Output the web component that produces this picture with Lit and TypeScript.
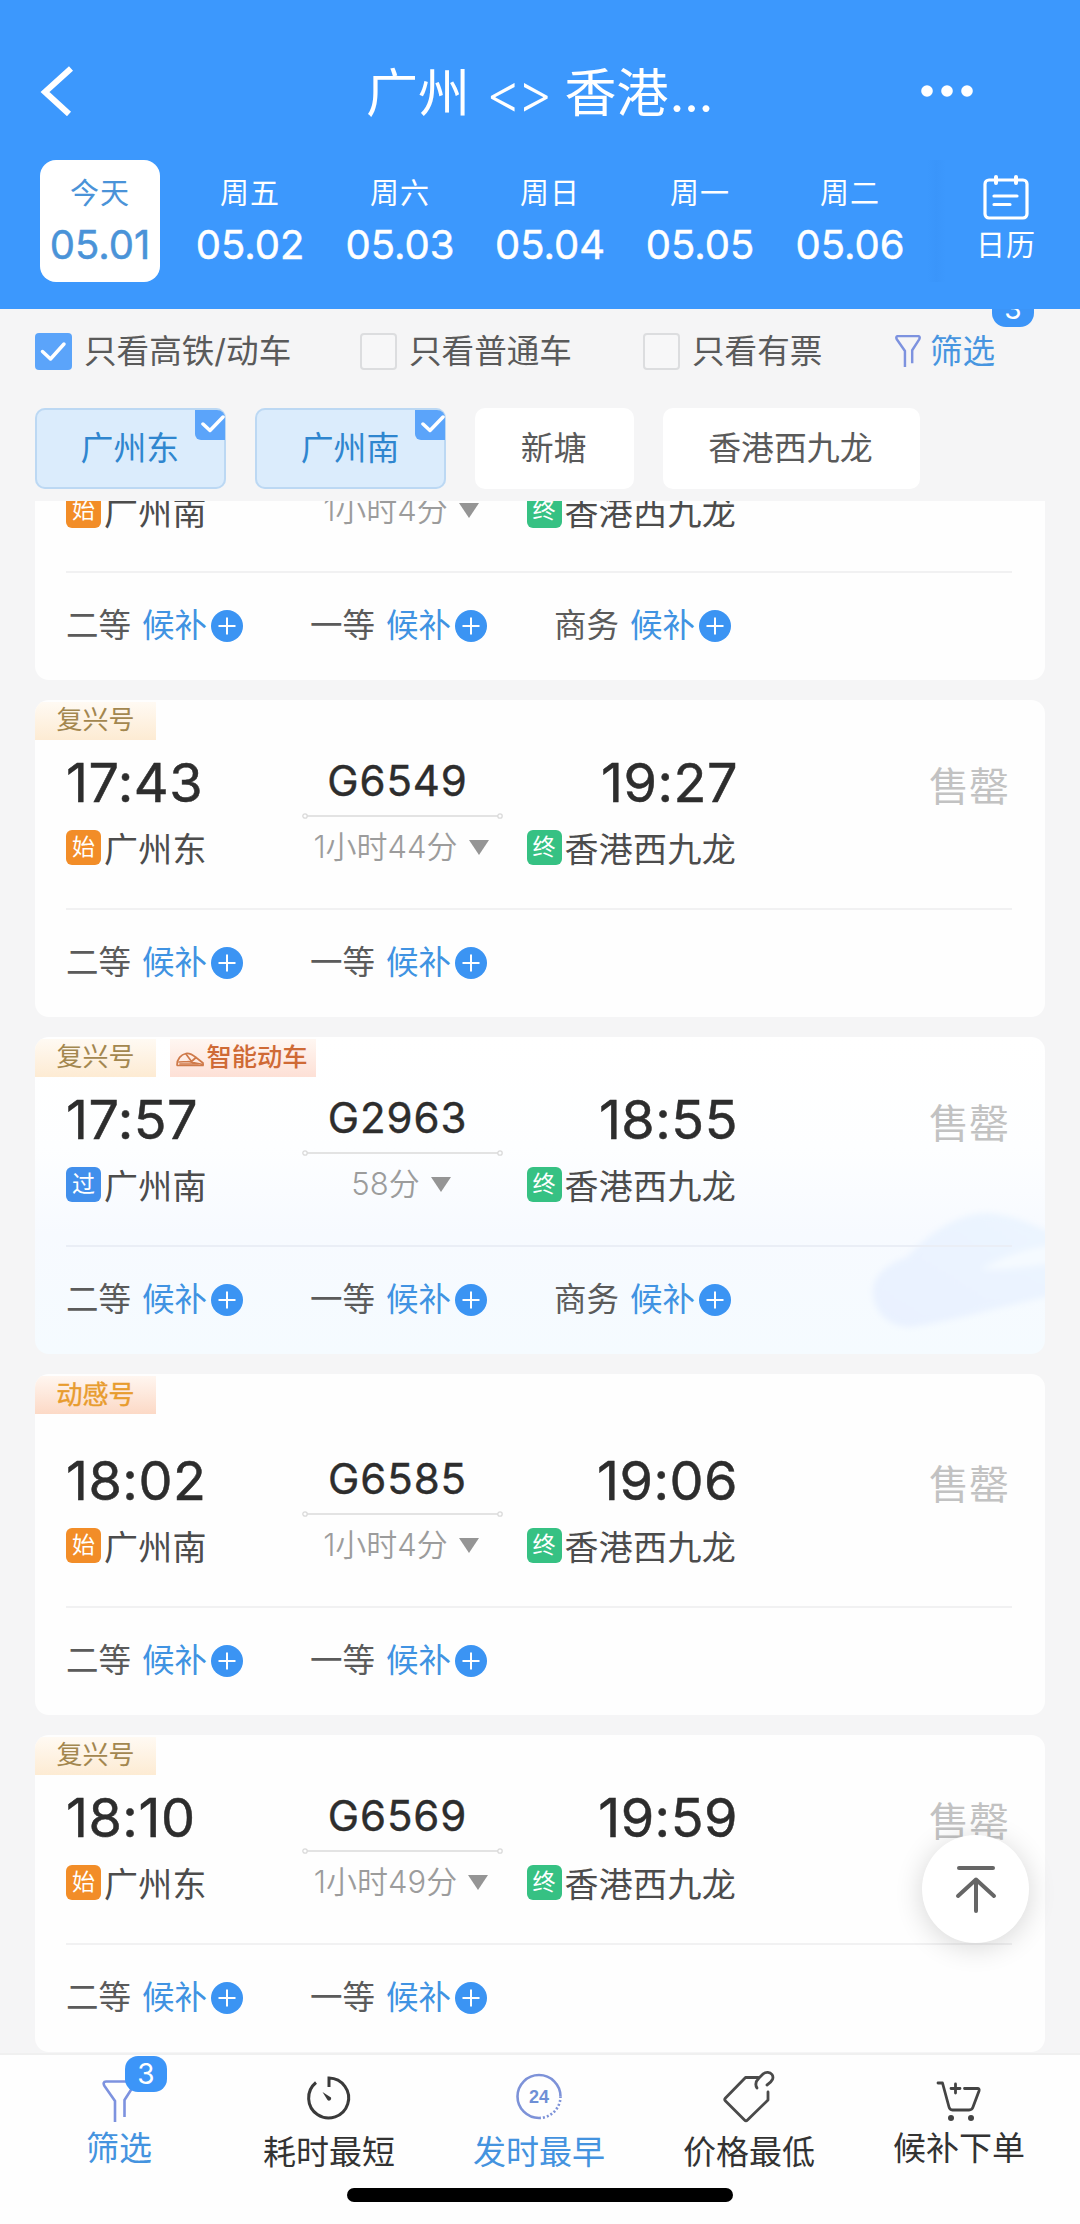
import { LitElement, html, css, svg, nothing } from "lit";
import { customElement, property } from "lit/decorators.js";
import { classMap } from "lit/directives/class-map.js";

interface Train {
  tags: { kind: "fuxing" | "smart" | "vibrant"; label: string }[];
  depart?: string;
  arrive?: string;
  code?: string;
  status?: string;
  duration: string;
  fromKind: "start" | "pass";
  from: string;
  to: string;
  seats: string[];
}

const TRAINS: Train[] = [
  { tags: [], duration: "1小时4分", fromKind: "start", from: "广州南", to: "香港西九龙", seats: ["二等", "一等", "商务"] },
  { tags: [{ kind: "fuxing", label: "复兴号" }], depart: "17:43", arrive: "19:27", code: "G6549", status: "售罄", duration: "1小时44分", fromKind: "start", from: "广州东", to: "香港西九龙", seats: ["二等", "一等"] },
  { tags: [{ kind: "fuxing", label: "复兴号" }, { kind: "smart", label: "智能动车" }], depart: "17:57", arrive: "18:55", code: "G2963", status: "售罄", duration: "58分", fromKind: "pass", from: "广州南", to: "香港西九龙", seats: ["二等", "一等", "商务"] },
  { tags: [{ kind: "vibrant", label: "动感号" }], depart: "18:02", arrive: "19:06", code: "G6585", status: "售罄", duration: "1小时4分", fromKind: "start", from: "广州南", to: "香港西九龙", seats: ["二等", "一等"] },
  { tags: [{ kind: "fuxing", label: "复兴号" }], depart: "18:10", arrive: "19:59", code: "G6569", status: "售罄", duration: "1小时49分", fromKind: "start", from: "广州东", to: "香港西九龙", seats: ["二等", "一等"] },
];

const DATES = [
  ["今天", "05.01"],
  ["周五", "05.02"],
  ["周六", "05.03"],
  ["周日", "05.04"],
  ["周一", "05.05"],
  ["周二", "05.06"],
];

const base = css`
  * { box-sizing: border-box; }
  svg { display: block; flex: none; }
`;

@customElement("train-card")
export class TrainCard extends LitElement {
  @property({ attribute: false }) train!: Train;

  static styles = [base, css`
    :host { display: block; flex: none; }
    .card { position: relative; height: 317px; border-radius: 14px; background: #fefefe; overflow: hidden; display: flex; flex-direction: column; }
    .card.tall { height: 341px; }
    .card.smart { background: linear-gradient(180deg, #ffffff 0%, #fdfeff 35%, #f7faff 62%, #f5fbff 100%); }
    .art { position: absolute; right: 0; top: 166px; }
    .tags { position: relative; height: 40px; flex: none; display: flex; gap: 14px; padding-top: 2px; align-items: flex-start; }
    .tall .tags { height: 64px; }
    .tag { height: 38px; display: flex; align-items: center; justify-content: center; font-size: 26px; line-height: 34px; padding-bottom: 2px; }
    .fuxing { width: 121px; background: linear-gradient(180deg, #fffaf3, #fdebd3); color: #a3874f; }
    .vibrant { width: 121px; background: linear-gradient(180deg, #fff6f0, #fcd9c6); color: #e89c2e; -webkit-text-stroke: 0.400px currentColor; }
    .vibrant { padding-bottom: 0; }
    .smart-tag { width: 146px; background: linear-gradient(180deg, #fff7f2, #fde0d6); color: #cf6a35; gap: 2px; font-size: 25.3px; font-weight: 500; padding-right: 2px; }
    .smart-tag svg { margin-top: 5px; }
    .info { position: relative; margin: 0 31px; height: 168px; flex: none; display: grid; grid-template-columns: 237px 199px 234px 1fr; }
    .col { display: flex; flex-direction: column; padding-top: 12px; }
    .right { align-items: flex-end; }
    .time { height: 61px; line-height: 61px; font-size: 54px; -webkit-text-stroke: 0.500px currentColor; color: #2d2d2d; letter-spacing: 0.500px; margin: 0 0 14px 0; }
    .right .time { margin-right: -2px; }
    .station { display: flex; align-items: center; height: 40px; font-size: 34px; line-height: 40px; letter-spacing: 0.3px; color: #4c4c4c; gap: 3px; }
    .station span { padding-top: 5px; }
    .mark { width: 35px; height: 35px; border-radius: 6px; color: #fff; font-size: 23px; line-height: 35px; text-align: center; letter-spacing: 0; }
    .start { background: #f28d28; }
    .pass { background: #418fec; }
    .end { background: #36c183; }
    .mid { display: flex; flex-direction: column; align-items: center; padding-top: 16px; }
    .code { height: 50px; line-height: 50px; font-size: 42px; -webkit-text-stroke: 0.400px currentColor; letter-spacing: 0.900px; color: #2d2d2d; margin-bottom: 7px; padding-right: 10px; }
    .dur { height: 36px; margin-top: 10px; display: flex; align-items: center; gap: 11px; font-size: 31px; line-height: 36px; color: #9c9c9c; padding-right: 3px; font-weight: 350; }
    .status { justify-self: end; margin: 22px 5px 0 0; height: 50px; line-height: 50px; font-size: 40px; color: #c2c2c2; }
    .seats { position: relative; margin: 0 33px 0 31px; border-top: 2px solid #f1f1f2; padding: 33px 0 0 0; display: flex; }
    .smart .seats { border-color: #eaeef6; }
    .seat { width: 244px; height: 40px; display: flex; align-items: center; font-size: 32.500px; line-height: 40px; color: #5b5b5b; }
    .wait { color: #4093e2; margin: 0 4px 0 11px; }
  `];

  render() {
    const t = this.train;
    const smart = t.tags.some((g) => g.kind === "smart");
    const tall = t.tags.some((g) => g.kind === "vibrant");
    return html`
      <div class=${classMap({ card: true, smart, tall })}>
        ${smart ? html`
          <svg class="art" width="190" height="151" viewBox="0 0 190 151">
            <defs>
              <linearGradient id="g" x1="0" y1="1" x2="1" y2="0"><stop offset="0" stop-color="#e9f1ff"/><stop offset="1" stop-color="#ecf5ff"/></linearGradient>
              <filter id="b"><feGaussianBlur stdDeviation="3"/></filter>
            </defs>
            <g filter="url(#b)">
              <path d="M18 92C16 76 28 62 52 54C76 28 104 10 134 10C156 12 176 20 200 32V92C150 102 100 118 56 124C32 124 20 108 18 92Z" fill="url(#g)"/>
              <path d="M126 66C146 54 172 44 200 42V60C172 64 146 68 126 66Z" fill="#f5faff"/>
            </g>
          </svg>` : nothing}
        <div class="tags">
          ${t.tags.map((g) => g.kind === "smart"
            ? html`<div class="tag smart-tag">
                <svg width="28" height="15" viewBox="0 0 28 15" fill="none" stroke="#cf7a4a" stroke-width="1.7" stroke-linejoin="round" stroke-linecap="round">
                  <path d="M1 13C1 7 5 2.500 10 1.500C14 1 17 3 20 5.500L27 11V13.500H1.500"/>
                  <path d="M3 10L12 9.500M10 2L15.500 9.500L20 5.500M12 9.500L27 12.500M4 12H22"/>
                </svg>${g.label}</div>`
            : html`<div class="tag ${g.kind}">${g.label}</div>`)}
        </div>
        <div class="info">
          <div class="col">
            <div class="time">${t.depart}</div>
            <div class="station"><div class="mark ${t.fromKind}">${t.fromKind === "start" ? "始" : "过"}</div><span>${t.from}</span></div>
          </div>
          <div class="mid">
            <div class="code">${t.code}</div>
            <svg width="201" height="6" viewBox="0 0 201 6" fill="none" stroke="#dadada" stroke-width="1.300"><path d="M5 3H196"/><circle cx="3" cy="3" r="2.200"/><circle cx="198" cy="3" r="2.200"/></svg>
            <div class="dur">${t.duration}<svg width="20" height="15" viewBox="0 0 20 15"><path d="M0 0H20L10 15Z" fill="#959595"/></svg></div>
          </div>
          <div class="col right">
            <div class="time">${t.arrive}</div>
            <div class="station"><div class="mark end">终</div><span>${t.to}</span></div>
          </div>
          <div class="status">${t.status}</div>
        </div>
        <div class="seats">
          ${t.seats.map((s) => html`
            <div class="seat">${s}<span class="wait">候补</span>
              <svg width="32" height="32" viewBox="0 0 32 32"><circle cx="16" cy="16" r="16" fill="#3b94f3"/><path d="M16 7.500V24.500M7.500 16H24.500" stroke="#fff" stroke-width="2"/></svg>
            </div>`)}
        </div>
      </div>`;
  }
}

const tick = (w: number, h: number, d: string) =>
  html`<svg width=${w} height=${h} viewBox="0 0 ${w} ${h}" fill="none" stroke="#fff" stroke-width="3.500" stroke-linecap="round" stroke-linejoin="round">${svg`<path d=${d}/>`}</svg>`;

@customElement("app-root")
export class AppRoot extends LitElement {
  static styles = [base, css`
    :host { display: block; }
    .page { position: relative; width: 1080px; height: 2224px; overflow: hidden; background: #f5f5f6; display: flex; flex-direction: column; font-family: Inter, "Noto Sans CJK SC", sans-serif; }
    header { position: relative; z-index: 2; height: 309px; flex: none; background: #3c98fd; color: #fff; display: flex; flex-direction: column; }
    .bar { height: 160px; padding: 57px 40px 43px 39px; display: grid; grid-template-columns: 1fr auto 1fr; align-items: center; }
    .title { font-size: 52px; line-height: 60px; padding-top: 7px; display: flex; gap: 16px; }
    .title .arrows { font-size: 54px; font-weight: 350; letter-spacing: -4px; }
    .title .dots { margin-left: -15px; letter-spacing: -0.500px; }
    .bar .more { justify-self: end; margin-right: 66px; }
    .days { display: flex; height: 122px; padding-left: 40px; }
    .day { width: 120px; margin-right: 30px; height: 122px; border-radius: 16px; display: flex; flex-direction: column; align-items: center; padding-top: 14px; }
    .wk { font-size: 29px; line-height: 40px; letter-spacing: 1px; }
    .date { font-size: 40px; -webkit-text-stroke: 0.500px currentColor; line-height: 50px; margin-top: 6px; white-space: nowrap; }
    .day.on { background: #fff; color: #4a93d8; }
    .cal { margin-left: -13px; width: 153px; display: flex; flex-direction: column; align-items: center; padding: 15px 0 0 5px; background: linear-gradient(90deg, #3c98fd, #3a95fa 6%, #3c98fd 12%); }
    .cal .wk { margin-top: 5px; }
    .filters { position: relative; height: 99px; flex: none; padding: 22px 35px 0; display: flex; align-items: flex-start; font-size: 32.600px; line-height: 40px; color: #5a5a5a; }
    .opt { display: flex; align-items: center; gap: 12px; height: 40px; }
    .opt.a { width: 325px; } .opt.b { width: 283px; } .opt.c { width: 252px; }
    .box { width: 37px; height: 37px; border: 2px solid #dcdddf; border-radius: 4px; background: #f7f7f8; }
    .box.on { border: 0; background: #5ba4fa; }
    .pick { color: #4795e0; display: flex; align-items: center; height: 40px; gap: 9px; }
    .count { position: absolute; width: 42px; height: 36px; border-radius: 14px; background: #3c95f8; color: #fff; font-size: 28px; line-height: 36px; text-align: center; }
    .filters .count { left: 992px; top: -18px; }
    .chips { height: 93px; flex: none; padding-left: 35px; display: flex; gap: 29px; }
    .chip { position: relative; height: 81px; padding: 0 47px 0 45.500px; border-radius: 10px; background: #fff; color: #5a5a5a; font-size: 32.900px; line-height: 80px; }
    .chip.on { background: #dbecfc; color: #2f86cf; box-shadow: inset 0 0 0 2px #bcd8f3; }
    .corner { position: absolute; right: 1px; top: 2px; width: 30px; height: 30px; background: #5ba4fa; border-radius: 0 8px 0 6px; }
    .list { flex: 1; min-height: 0; overflow: hidden; padding: 0 35px 1px; display: flex; flex-direction: column; justify-content: flex-end; gap: 20px; }
    .up { position: absolute; left: 922px; top: 1835px; width: 107px; height: 108px; border-radius: 50%; background: #fff; box-shadow: 0 4px 28px rgba(0, 0, 0, 0.16); display: flex; align-items: center; justify-content: center; }
    footer { height: 171px; flex: none; background: #fefefe; border-top: 2px solid #f0f0f0; display: flex; flex-direction: column; align-items: center; }
    .tabs { width: 1050px; margin-left: -2px; height: 133px; display: flex; }
    .tab { position: relative; width: 210px; display: flex; flex-direction: column; align-items: center; justify-content: space-between; height: 117px; padding-top: 14px; font-size: 33px; line-height: 40px; color: #333; }
    .tab.hi { height: 113px; }
    .tab.funnel { padding-top: 25px; }
    .tab.sel { color: #4493df; }
    .tab .count { left: 111px; top: 1px; border-radius: 13px; }
    .home { width: 386px; height: 14px; border-radius: 7px; background: #000; }
  `];

  render() {
    const funnel = (w: number, h: number, sw: number) => html`
      <svg width=${w} height=${h} viewBox="0 0 34 42" fill="none" stroke="#7d92df" stroke-width=${sw} stroke-linejoin="round">
        <path d="M13 42V21L2.500 6C1 3.500 1.500 1.500 4 1.500H30C32.500 1.500 33 3.500 31.500 6L22.500 20V37"/>
      </svg>`;
    return html`
      <div class="page">
        <header>
          <div class="bar">
            <svg width="36" height="50" viewBox="0 0 36 50" fill="none" stroke="#fff" stroke-width="6"><path d="M32 2.500L6 26L30 48"/></svg>
            <div class="title"><span>广州</span><span class="arrows">&lt;&gt;</span><span>香港</span><span class="dots">...</span></div>
            <svg class="more" width="54" height="14" viewBox="0 0 54 14" fill="#fff"><circle cx="7" cy="7" r="5.800"/><circle cx="27" cy="7" r="5.800"/><circle cx="47" cy="7" r="5.800"/></svg>
          </div>
          <div class="days">
            ${DATES.map(([w, d], i) => html`<div class=${classMap({ day: true, on: i === 0 })}><div class="wk">${w}</div><div class="date">${d}</div></div>`)}
            <div class="cal">
              <svg width="46" height="46" viewBox="0 0 46 46" fill="none" stroke="#fff" stroke-width="3.200" stroke-linecap="round">
                <rect x="2" y="5" width="42" height="38" rx="4"/>
                <path d="M13 2V8M33 2V8" stroke-width="4"/><path d="M11 21H34M11 29.500H27"/>
              </svg>
              <div class="wk">日历</div>
            </div>
          </div>
        </header>
        <div class="filters">
          <div class="opt a"><div class="box on">${tick(37, 37, "M7.500 18.500L15.500 26L29 11")}</div>只看高铁/动车</div>
          <div class="opt b"><div class="box"></div>只看普通车</div>
          <div class="opt c"><div class="box"></div>只看有票</div>
          <div class="pick">${funnel(26, 32, 3.2)}<span>筛选</span></div>
          <div class="count">3</div>
        </div>
        <div class="chips">
          ${["广州东", "广州南"].map((s) => html`<div class="chip on">${s}<div class="corner">${tick(30, 30, "M8 14L15 20.500L28 7")}</div></div>`)}
          <div class="chip">新塘</div>
          <div class="chip">香港西九龙</div>
        </div>
        <div class="list">${TRAINS.map((t) => html`<train-card .train=${t}></train-card>`)}</div>
        <footer>
          <div class="tabs">
            <div class="tab hi sel funnel">${funnel(34, 42, 2.6)}<div class="count">3</div><span>筛选</span></div>
            <div class="tab">
              <svg width="50" height="56" viewBox="0 0 50 56" fill="none" stroke="#3a3a3a" stroke-width="3"><path d="M12 13.500A20 20 0 1 0 25 9V18"/><path d="M18.500 23L23.500 31A2.200 2.200 0 0 0 27 28.500Z" fill="#3a3a3a" stroke="none"/></svg>
              <span>耗时最短</span>
            </div>
            <div class="tab sel">
              <svg width="50" height="56" viewBox="0 0 50 56" fill="none" stroke="#7d92d8" stroke-width="2.600"><path d="M46.500 27.500A21.500 21.500 0 1 0 25 49"/><path d="M25 49A21.500 21.500 0 0 0 46.500 27.500" stroke-dasharray="2 2"/><text x="25" y="34" text-anchor="middle" font-family="Liberation Sans, sans-serif" font-size="18" font-weight="700" fill="#6e8fd6" stroke="none">24</text></svg>
              <span>发时最早</span>
            </div>
            <div class="tab">
              <svg width="52" height="56" viewBox="0 0 52 56" fill="none" stroke="#4a4a4a" stroke-width="2.800" stroke-linejoin="round" stroke-linecap="round"><path d="M35 8.500H22.500L2.500 29C1.500 30 1.500 31 2.500 32L21.500 51C22.500 52 23.500 52 24.500 51L45 31V23"/><path d="M34 19C31.500 15 33 12 36 9L40 5C43 2.500 47 3 49 5.500C51 8.500 50 12 44 16"/></svg>
              <span>价格最低</span>
            </div>
            <div class="tab hi">
              <svg width="46" height="56" viewBox="0 0 46 56" fill="none" stroke="#444" stroke-width="2.800" stroke-linejoin="round" stroke-linecap="round"><path d="M2 14H6.500L13 38C13.500 40 14.500 41 16.500 41H33C35 41 36.500 40 37 38L43 22C43.500 20.500 43 19.500 41.500 19.500H28.500"/><path d="M19.500 15V24M15 19.500H24"/><g fill="#444" stroke="none"><circle cx="15" cy="49" r="3"/><circle cx="35" cy="49" r="3"/></g></svg>
              <span>候补下单</span>
            </div>
          </div>
          <div class="home"></div>
        </footer>
        <div class="up">
          <svg width="42" height="48" viewBox="0 0 42 48" fill="none" stroke="#666" stroke-width="4" stroke-linecap="round"><path d="M4 3H38"/><path d="M21 14.500V46M3 31L21 14.500L39 31" stroke-linejoin="round"/></svg>
        </div>
      </div>`;
  }
}
